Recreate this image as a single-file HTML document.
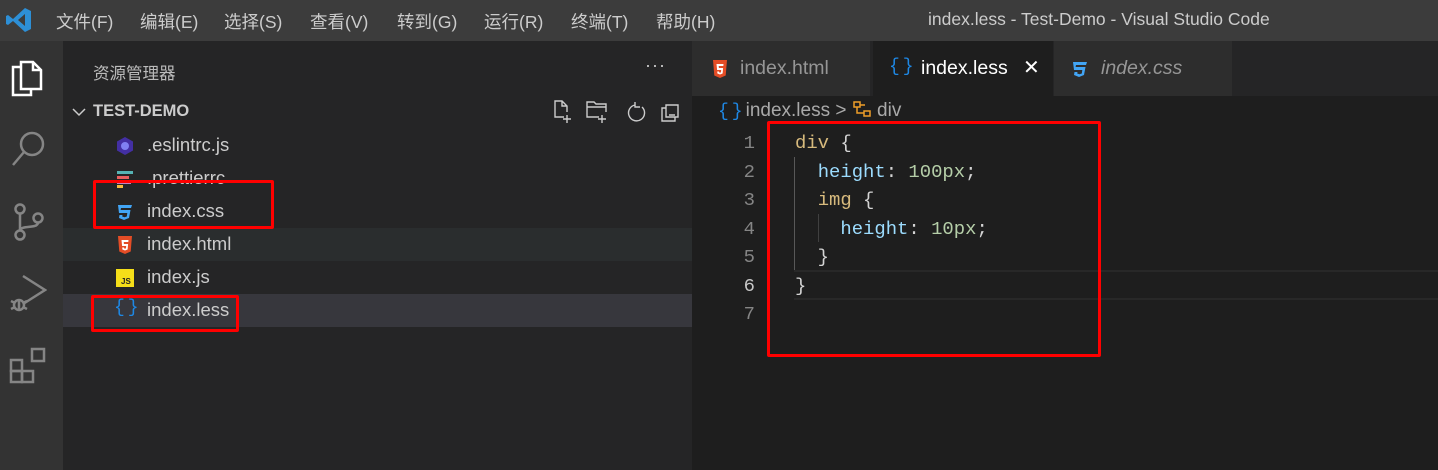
<!DOCTYPE html>
<html><head><meta charset="utf-8"><style>
*{margin:0;padding:0;box-sizing:border-box}
body{width:1438px;height:470px;overflow:hidden;background:#1e1e1e;font-family:"Liberation Sans","Noto Sans CJK SC",sans-serif;position:relative}
.abs{position:absolute}
#title{left:0;top:0;width:1438px;height:41px;background:#3c3c3c;color:#ccc;font-size:17.5px}
#title span{position:absolute;top:9px}
#act{left:0;top:41px;width:63px;height:429px;background:#333}
#side{left:63px;top:41px;width:629px;height:429px;background:#252526;color:#ccc}
.row{position:absolute;left:0;width:629px;height:33px;font-size:18.5px;color:#ccc}
.row .t{position:absolute;left:84px;top:5px}
.row .i{position:absolute;left:52px;top:7px;width:20px;height:20px}
#tabs{left:692px;top:41px;width:746px;height:55px;background:#252526}
.tab{position:absolute;top:0;height:55px;font-size:19.5px}
.mono{font-family:"Liberation Mono","DejaVu Sans Mono",monospace;font-size:18.9px}
.ln{position:absolute;left:700px;width:55px;text-align:right;color:#858585}
.code{position:absolute;left:795px;white-space:pre}
.red{position:absolute;border:3px solid #f00;border-radius:2px}
.br{color:#1e88e5;font-family:"Liberation Mono",monospace;letter-spacing:3px}
</style></head><body>
<div id="title" class="abs">
<svg class="abs" style="left:6px;top:7px" width="26" height="26" viewBox="0 0 26 26"><path d="M19 1 L25 4 V22 L19 25 L7 14 L2 18 L0 17 V9 L2 8 L7 12 Z M19 7 L12 13 L19 19 Z" fill="#2d8fd6"/></svg>
<span style="left:56px">文件(F)</span><span style="left:140px">编辑(E)</span><span style="left:224px">选择(S)</span><span style="left:310px">查看(V)</span><span style="left:397px">转到(G)</span><span style="left:484px">运行(R)</span><span style="left:571px">终端(T)</span><span style="left:656px">帮助(H)</span>
<span style="left:928px">index.less - Test-Demo - Visual Studio Code</span>
</div>
<div id="act" class="abs">
<svg class="abs" style="left:9px;top:18px" width="36" height="40" viewBox="0 0 36 40" fill="none" stroke="#fff" stroke-width="2.5"><path d="M11 8 H4 V36 H22 V31"/><path d="M12 3 H24 L32 11 V30 H12 Z"/><path d="M24 3 V11 H32"/></svg>
<svg class="abs" style="left:10px;top:88px" width="38" height="40" viewBox="0 0 38 40" fill="none" stroke="#858585" stroke-width="2.5"><circle cx="22" cy="15" r="11"/><path d="M14 23 L3 36"/></svg>
<svg class="abs" style="left:10px;top:160px" width="36" height="42" viewBox="0 0 36 42" fill="none" stroke="#858585" stroke-width="2.5"><circle cx="10" cy="8" r="4.5"/><circle cx="10" cy="34" r="4.5"/><circle cx="28" cy="17" r="4.5"/><path d="M10 12.5 V29.5 M28 21.5 C28 28 12 24 10 29"/></svg>
<svg class="abs" style="left:7px;top:232px" width="40" height="42" viewBox="0 0 40 42" fill="none" stroke="#858585" stroke-width="2.5"><path d="M16 3 L38 17 L16 31"/><circle cx="12" cy="32" r="5"/><path d="M4 28 L8 30 M4 36 L8 34 M20 28 L16 30 M20 36 L16 34 M12 27 V37"/></svg>
<svg class="abs" style="left:8px;top:305px" width="40" height="40" viewBox="0 0 40 40" fill="none" stroke="#858585" stroke-width="2.5"><rect x="3" y="14" width="11" height="11"/><rect x="3" y="25" width="11" height="11"/><rect x="14" y="25" width="11" height="11"/><rect x="24" y="3" width="12" height="12"/></svg>
</div>
<div id="side" class="abs">
<div class="abs" style="left:30px;top:19px;font-size:16.5px;color:#bbb">资源管理器</div>
<div class="abs" style="left:582px;top:14px;font-size:18px;color:#ccc;letter-spacing:1px">···</div>
<svg class="abs" style="left:8px;top:64px" width="16" height="14" viewBox="0 0 16 14" fill="none" stroke="#ccc" stroke-width="1.5"><path d="M2 4 L8 10 L14 4"/></svg>
<div class="abs" style="left:30px;top:61px;font-size:16.5px;font-weight:bold;color:#ccc">TEST-DEMO</div>
<svg class="abs" style="left:488px;top:58px" width="135" height="26" viewBox="0 0 135 26" fill="none" stroke="#ccc" stroke-width="1.4"><path d="M13 18 H4 V2 H11 L16 7 V13 M11 2 V7 H16 M16 16 V24 M12 20 H20"/><path d="M48 18 H36 V3 H43 L45 5 H55 V13 M36 8 H55 M51 16 V24 M47 20 H55"/><path d="M84 6 A8 8 0 1 0 91 8 M84 3 V8 H89"/><path d="M115 9 H111 V22 H124 V18 M115 6 H127 V18 H115 Z M118 16 H124"/></svg>
<div class="row" style="top:88px"><svg class="i" viewBox="0 0 20 20"><path d="M10 1 L18 5.5 V14.5 L10 19 L2 14.5 V5.5Z" fill="#4b32c3" opacity=".8"/><circle cx="10" cy="10" r="4" fill="#8080f2"/></svg><span class="t">.eslintrc.js</span></div>
<div class="row" style="top:121px"><svg class="i" viewBox="0 0 20 20"><rect x="2" y="2" width="16" height="3" fill="#56b3b4"/><rect x="2" y="7" width="12" height="3" fill="#ea5e5e"/><rect x="2" y="12" width="14" height="3" fill="#bf85bf"/><rect x="2" y="16" width="6" height="3" fill="#f7ba3e"/></svg><span class="t">.prettierrc</span></div>
<div class="row" style="top:154px"><svg class="i" viewBox="0 0 20 20"><path d="M3 3 H17 L16 6 H6 L5.6 8 H15.5 L14 16 L9 18 L4 16 L4.5 13 H7.5 L7.2 14.5 L9.5 15.2 L11.8 14.5 L12.3 11 H4 Z" fill="#42a5f5"/></svg><span class="t">index.css</span></div>
<div class="row" style="top:187px;background:#2a2d2e"><svg class="i" viewBox="0 0 20 20"><path d="M3 1 H17 L15.7 16.5 L10 19 L4.3 16.5Z" fill="#e44d26"/><path d="M6.5 5 H13.5 L13.3 7 H8.7 L8.9 9 H13.1 L12.6 14.5 L10 15.5 L7.4 14.5 L7.2 12.5 H9 L9.1 13.3 L10 13.7 L11 13.3 L11.2 11 H7.1 Z" fill="#fff"/></svg><span class="t">index.html</span></div>
<div class="row" style="top:220px"><svg class="i" viewBox="0 0 20 20"><rect x="1" y="1" width="18" height="18" fill="#f5de19"/><text x="6" y="16" font-size="8" font-family="Liberation Sans" font-weight="bold" fill="#222">JS</text></svg><span class="t">index.js</span></div>
<div class="row" style="top:253px;background:#37373d"><span class="abs br" style="left:51px;top:4px;font-size:18px">{}</span><span class="t">index.less</span></div>
</div>
<div id="tabs" class="abs">
<div class="tab" style="left:0;width:178px;background:#2d2d2d"><svg class="abs" style="left:18px;top:18px" width="20" height="20" viewBox="0 0 20 20"><path d="M3 1 H17 L15.7 16.5 L10 19 L4.3 16.5Z" fill="#e44d26"/><path d="M6.5 5 H13.5 L13.3 7 H8.7 L8.9 9 H13.1 L12.6 14.5 L10 15.5 L7.4 14.5 L7.2 12.5 H9 L9.1 13.3 L10 13.7 L11 13.3 L11.2 11 H7.1 Z" fill="#fff"/></svg><span class="abs" style="left:48px;top:16px;color:#969696">index.html</span></div>
<div class="tab" style="left:181px;width:180px;background:#1e1e1e"><span class="abs br" style="left:16px;top:16px;font-size:18px">{}</span><span class="abs" style="left:48px;top:16px;color:#fff">index.less</span><span class="abs" style="left:150px;top:14px;color:#fff;font-size:20px">✕</span></div>
<div class="tab" style="left:362px;width:178px;background:#2d2d2d"><svg class="abs" style="left:16px;top:18px" width="20" height="20" viewBox="0 0 20 20"><path d="M3 3 H17 L16 6 H6 L5.6 8 H15.5 L14 16 L9 18 L4 16 L4.5 13 H7.5 L7.2 14.5 L9.5 15.2 L11.8 14.5 L12.3 11 H4 Z" fill="#42a5f5"/></svg><span class="abs" style="left:47px;top:16px;color:#969696;font-style:italic">index.css</span></div>
</div>
<div class="abs" style="left:718px;top:100px;font-size:19px;color:#a9a9a9"><span class="br" style="font-size:18px">{}</span>index.less <span>&gt;</span> <svg width="20" height="18" viewBox="0 0 20 18" fill="none" stroke="#ee9d28" stroke-width="1.5" style="vertical-align:-2px"><rect x="2" y="2" width="6" height="5"/><rect x="12" y="11" width="6" height="5"/><path d="M8 5 H13 M5 7 V13 H12"/></svg> div</div>
<div class="abs" style="left:794px;top:298px;width:644px;height:2px;background:#282828"></div>
<div class="abs" style="left:794px;top:270px;width:644px;height:2px;background:#282828"></div>
<div class="abs" style="left:794px;top:157px;width:1px;height:113px;background:#585858"></div>
<div class="abs" style="left:818px;top:214px;width:1px;height:28px;background:#404040"></div>
<div class="mono">
<div class="ln" style="top:132px">1</div><div class="ln" style="top:161px">2</div><div class="ln" style="top:189px">3</div><div class="ln" style="top:218px">4</div><div class="ln" style="top:246px">5</div><div class="ln" style="top:275px;color:#c6c6c6">6</div><div class="ln" style="top:303px">7</div>
<div class="code" style="top:132px"><span style="color:#d7ba7d">div</span><span style="color:#d4d4d4"> {</span></div>
<div class="code" style="top:161px">  <span style="color:#9cdcfe">height</span><span style="color:#d4d4d4">: </span><span style="color:#b5cea8">100px</span><span style="color:#d4d4d4">;</span></div>
<div class="code" style="top:189px">  <span style="color:#d7ba7d">img</span><span style="color:#d4d4d4"> {</span></div>
<div class="code" style="top:218px">    <span style="color:#9cdcfe">height</span><span style="color:#d4d4d4">: </span><span style="color:#b5cea8">10px</span><span style="color:#d4d4d4">;</span></div>
<div class="code" style="top:246px;color:#d4d4d4">  }</div>
<div class="code" style="top:275px;color:#d4d4d4">}</div>
</div>
<div class="red" style="left:93px;top:180px;width:181px;height:49px"></div>
<div class="red" style="left:91px;top:295px;width:148px;height:37px"></div>
<div class="red" style="left:767px;top:121px;width:334px;height:236px"></div>
</body></html>
